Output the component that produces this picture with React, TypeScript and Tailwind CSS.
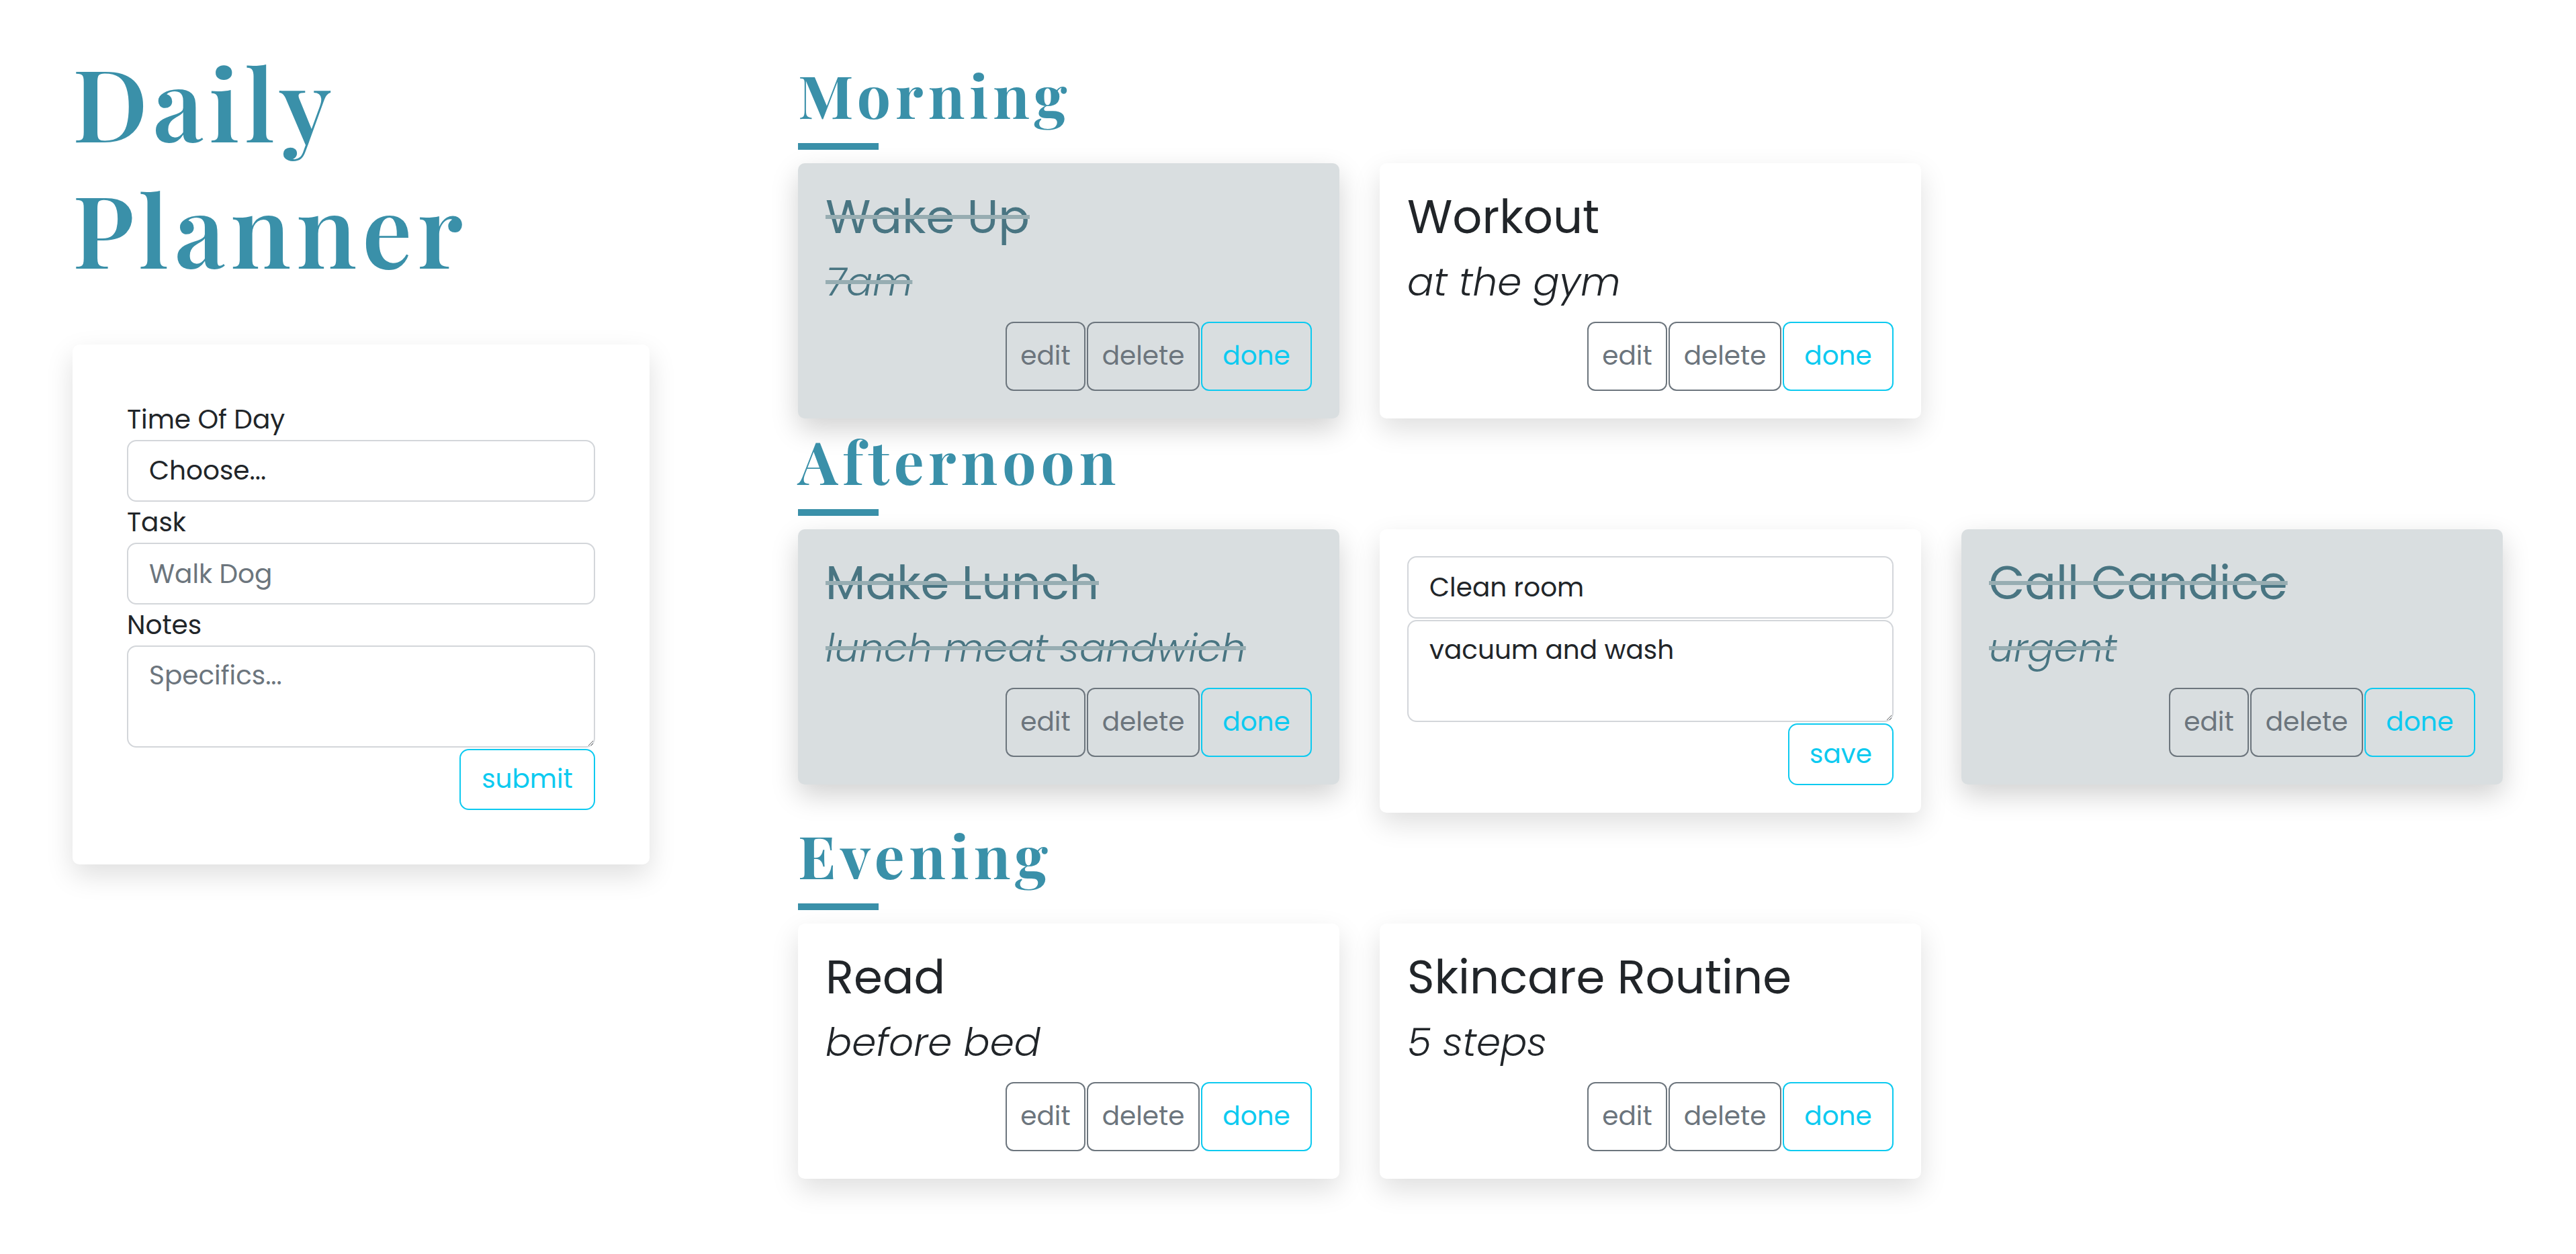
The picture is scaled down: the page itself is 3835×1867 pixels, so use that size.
import React from 'react';

interface Task {
  id: number;
  title: string;
  notes: string;
  done?: boolean;
  editing?: boolean;
}

interface Section {
  name: string;
  tasks: Task[];
}

const sections: Section[] = [
  {
    name: 'Morning',
    tasks: [
      { id: 1, title: 'Wake Up', notes: '7am', done: true },
      { id: 2, title: 'Workout', notes: 'at the gym' },
    ],
  },
  {
    name: 'Afternoon',
    tasks: [
      { id: 3, title: 'Make Lunch', notes: 'lunch meat sandwich', done: true },
      { id: 4, title: 'Clean room', notes: 'vacuum and wash', editing: true },
      { id: 5, title: 'Call Candice', notes: 'urgent', done: true },
    ],
  },
  {
    name: 'Evening',
    tasks: [
      { id: 6, title: 'Read', notes: 'before bed' },
      { id: 7, title: 'Skincare Routine', notes: '5 steps' },
    ],
  },
];

const body = "font-['Poppins','Open_Sans',sans-serif]";
const serif = "font-['Playfair_Display','Liberation_Serif',serif]";

const inputCls =
  'block w-full h-[92px] rounded-[14px] border-2 border-[#d3d6da] bg-white px-[31px] text-[39px] text-[#212529] outline-none placeholder:text-[#6c757d]';

const TaskCard: React.FC<{ task: Task }> = ({ task }) => {
  if (task.editing) {
    return (
      <div className="w-[806px] shrink-0 rounded-[10px] bg-white px-[41px] pt-[40px] pb-[41px] shadow-[0_16px_40px_rgba(0,0,0,0.13)]">
        <input className={inputCls + ' h-[93px]'} defaultValue={task.title} />
        <textarea
          className="mt-[2px] block h-[152px] w-full rounded-[14px] border-2 border-[#d3d6da] bg-white px-[31px] py-[14px] text-[39px] leading-[1.5] text-[#212529] outline-none"
          defaultValue={task.notes}
        />
        <div className="mt-[2px] flex justify-end">
          <button className="h-[92px] w-[157px] rounded-[14px] border-2 border-[#0dcaf0] text-[39px] text-[#0dcaf0]">
            save
          </button>
        </div>
      </div>
    );
  }

  const done = task.done;
  return (
    <div
      className={`w-[806px] shrink-0 rounded-[10px] px-[41px] pt-[39px] pb-[41px] ${
        done ? 'bg-[#d9dee0] shadow-[0_16px_40px_rgba(0,0,0,0.18)]' : 'bg-white shadow-[0_16px_40px_rgba(0,0,0,0.13)]'
      }`}
    >
      <h3
        className={`text-[69px] leading-[82px] font-normal ${
          done ? 'text-[#497582] line-through decoration-[#97adb2] decoration-6' : 'text-[#212529]'
        }`}
      >
        {task.title}
      </h3>
      <h4
        className={`mt-[21px] text-[58px] leading-[70px] font-light italic ${
          done ? 'text-[#497582] line-through decoration-[#97adb2] decoration-6' : 'text-[#212529]'
        }`}
      >
        {task.notes}
      </h4>
      <div className="mt-[24px] flex justify-end gap-[2px]">
        <button className="h-[103px] w-[119px] rounded-[12px] border-2 border-[#6c757d] text-[39px] text-[#6c757d]">
          edit
        </button>
        <button className="h-[103px] w-[168px] rounded-[12px] border-2 border-[#6c757d] text-[39px] text-[#6c757d]">
          delete
        </button>
        <button className="h-[103px] w-[165px] rounded-[12px] border-2 border-[#0dcaf0] text-[39px] text-[#0dcaf0]">
          done
        </button>
      </div>
    </div>
  );
};

const App: React.FC = () => {
  return (
    <div className={`min-h-screen bg-white flex pl-[108px] ${body}`}>
      {/* left column: title + new task form */}
      <div className="w-[859px] shrink-0 pt-[57px]">
        <h1 className={`${serif} text-[148px] leading-[188px] font-semibold tracking-[8px] text-[#3a90a9]`}>
          Daily
          <br />
          Planner
        </h1>

        <form className="mt-[80px] rounded-[10px] bg-white px-[81px] pt-[81px] pb-[81px] shadow-[0_16px_40px_rgba(0,0,0,0.13)]">
          <label className="block text-[39px] leading-[61px] text-[#212529]">Time Of Day</label>
          <select className={inputCls + ' appearance-none'} defaultValue="">
            <option value="">Choose...</option>
            <option value="morning">Morning</option>
            <option value="afternoon">Afternoon</option>
            <option value="evening">Evening</option>
          </select>
          <label className="block text-[39px] leading-[61px] text-[#212529]">Task</label>
          <input className={inputCls} placeholder="Walk Dog" />
          <label className="block text-[39px] leading-[61px] text-[#212529]">Notes</label>
          <textarea
            className="block h-[152px] w-full rounded-[14px] border-2 border-[#d3d6da] bg-white px-[31px] py-[14px] text-[39px] leading-[1.5] text-[#212529] outline-none placeholder:text-[#6c757d]"
            placeholder="Specifics..."
          />
          <div className="mt-[2px] flex justify-end">
            <button
              type="button"
              className="h-[91px] w-[202px] rounded-[14px] border-2 border-[#0dcaf0] text-[39px] text-[#0dcaf0]"
            >
              submit
            </button>
          </div>
        </form>
      </div>

      {/* right column: sections */}
      <div className="ml-[221px] pt-[83px] pb-[80px]">
        {sections.map((section, i) => (
          <section key={section.name} className={i === 0 ? '' : 'mt-[5px]'}>
            <h2 className={`${serif} text-[89px] leading-[114px] font-bold tracking-[7px] text-[#3a90a9]`}>
              {section.name}
            </h2>
            <div className="mt-[16px] h-[10px] w-[120px] bg-[#3a90a9]" />
            <div className="mt-[20px] flex items-start gap-[60px]">
              {section.tasks.map(task => (
                <TaskCard key={task.id} task={task} />
              ))}
            </div>
          </section>
        ))}
      </div>
    </div>
  );
};

export default App;
